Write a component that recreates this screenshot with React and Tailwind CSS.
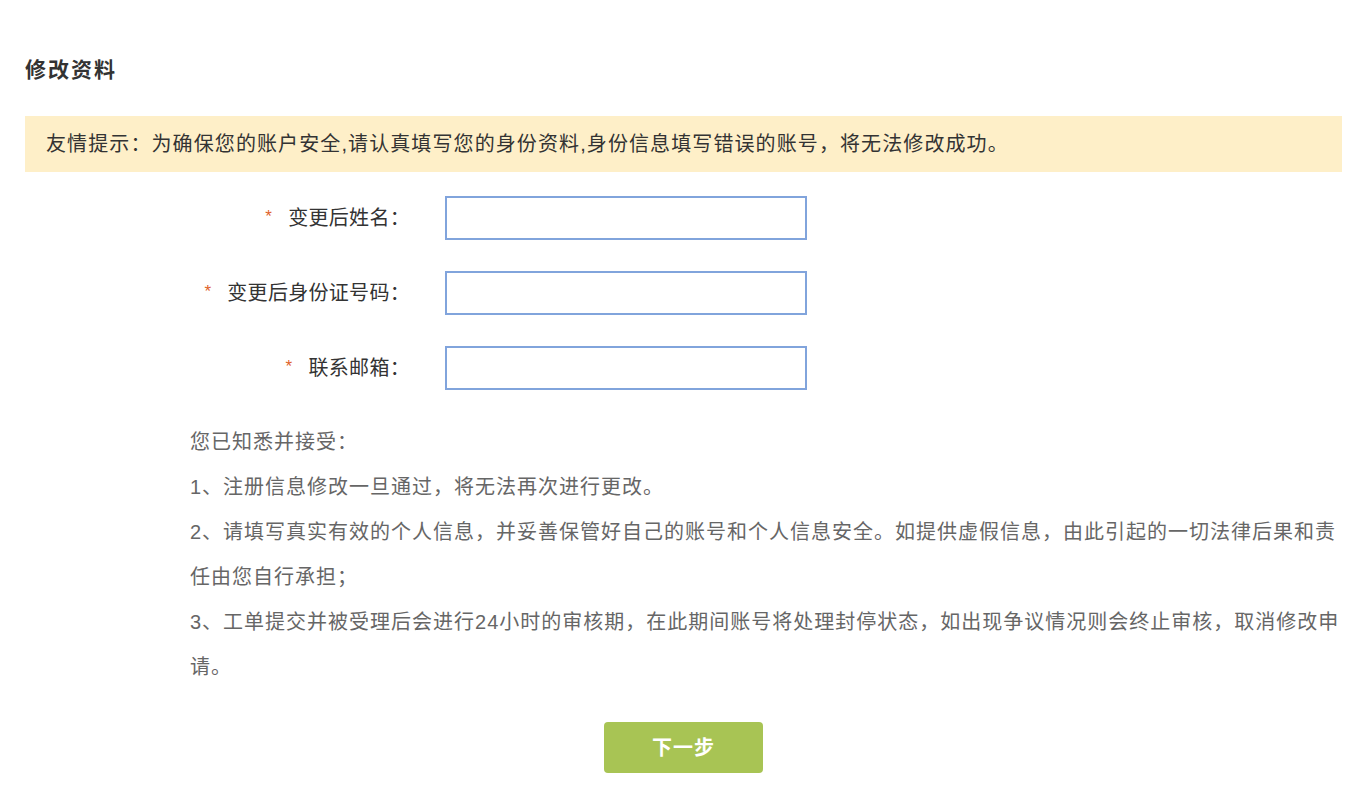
import React from 'react';

const fields = [
  { id: 'name', label: '变更后姓名：' },
  { id: 'idcard', label: '变更后身份证号码：' },
  { id: 'email', label: '联系邮箱：' },
];

const terms = [
  '您已知悉并接受：',
  '1、注册信息修改一旦通过，将无法再次进行更改。',
  '2、请填写真实有效的个人信息，并妥善保管好自己的账号和个人信息安全。如提供虚假信息，由此引起的一切法律后果和责任由您自行承担；',
  '3、工单提交并被受理后会进行24小时的审核期，在此期间账号将处理封停状态，如出现争议情况则会终止审核，取消修改申请。',
];

export default function App() {
  return (
    <div
      className="min-h-screen bg-white px-[25px] pt-[55px] pb-[36px]"
      style={{ fontFamily: '"Liberation Sans", "Noto Sans CJK SC", sans-serif' }}
    >
      <h2 className="text-[21px] leading-[30px] font-bold tracking-[2px] text-[#333]">修改资料</h2>

      {/* tips */}
      <div className="mt-[31px] mr-[-13px] h-[56px] flex items-center bg-[#feefc8] pl-[21px]">
        <p className="text-[20px] tracking-[1.1px] text-[#333]">
          友情提示：为确保您的账户安全,请认真填写您的身份资料,身份信息填写错误的账号，将无法修改成功。
        </p>
      </div>

      {/* form */}
      <div className="mt-[24px] flex flex-col gap-[31px]">
        {fields.map((f) => (
          <div key={f.id} className="flex items-center">
            <label className="w-[385px] flex justify-end items-center text-[20px] tracking-[0.3px] text-[#333]">
              <span className="text-[#e0632c] text-[17px] mr-[16px] -translate-y-[1px]">*</span>
              {f.label}
            </label>
            <input
              type="text"
              className="ml-[35px] w-[362px] h-[44px] border-2 border-[#81a4dc] bg-white outline-none px-2"
            />
          </div>
        ))}
      </div>

      {/* terms */}
      <div className="mt-[30px] ml-[165px] mr-[-13px]">
        {terms.map((t, i) => (
          <p key={i} className="text-[20px] leading-[45px] tracking-[1px] text-[#666]">
            {t}
          </p>
        ))}
      </div>

      <div className="mt-[32px] flex justify-center">
        <button className="ml-[13px] w-[159px] h-[51px] rounded-[4px] bg-[#a8c454] text-white text-[20px] font-bold tracking-[1px]">
          下一步
        </button>
      </div>
    </div>
  );
}
